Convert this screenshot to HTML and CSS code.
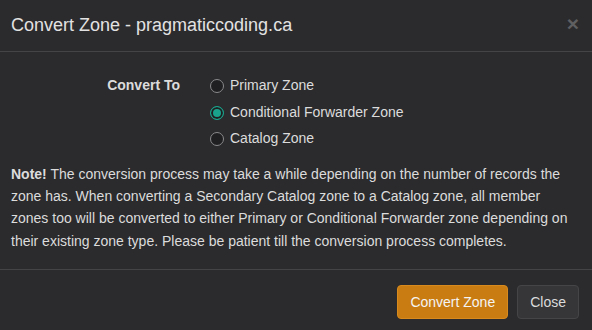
FILE: index.html
```html
<!DOCTYPE html>
<html lang="en">
<head>
    <meta charset="UTF-8">
    <meta name="viewport" content="width=device-width, initial-scale=1.0">
    <title>Convert Zone</title>
    <link rel="stylesheet" href="styles.css">
</head>
<body>
    <div class="modal">
        <div class="modal-header">
            <h4 class="modal-title">Convert Zone - pragmaticcoding.ca</h4>
            <button class="close" type="button">&times;</button>
        </div>
        <div class="modal-body">
            <div class="form-row">
                <label class="control-label">Convert To</label>
                <div class="radios">
                    <label class="radio"><input type="radio" name="zoneType" value="Primary"><span>Primary Zone</span></label>
                    <label class="radio"><input type="radio" name="zoneType" value="Forwarder" checked><span>Conditional Forwarder Zone</span></label>
                    <label class="radio"><input type="radio" name="zoneType" value="Catalog"><span>Catalog Zone</span></label>
                </div>
            </div>
            <p class="note"><b>Note!</b> The conversion process may take a while depending on the number of records the zone has. When converting a Secondary Catalog zone to a Catalog zone, all member zones too will be converted to either Primary or Conditional Forwarder zone depending on their existing zone type. Please be patient till the conversion process completes.</p>
        </div>
        <div class="modal-footer">
            <button class="btn btn-warning" type="button">Convert Zone</button>
            <button class="btn btn-default" type="button">Close</button>
        </div>
    </div>
</body>
</html>
```

FILE: styles.css
```css
body {
    margin: 0;
    padding: 0;
    background: #2b2b2d;
    font-family: 'Liberation Sans', Arial, sans-serif;
    font-size: 14px;
    color: #dcdcdc;
}
.modal {
    background: #2b2b2d;
}
.modal-header {
    display: flex;
    align-items: center;
    justify-content: space-between;
    height: 52px;
    padding: 0 11px;
    border-bottom: 1px solid #444446;
    box-sizing: border-box;
}
.modal-title {
    margin: 0;
    font-size: 18px;
    font-weight: normal;
    color: #e2e2e2;
}
.close {
    background: none;
    border: none;
    padding: 0;
    margin-right: 2px;
    margin-top: -5px;
    font-family: 'Liberation Sans', Arial, sans-serif;
    font-size: 21px;
    font-weight: bold;
    line-height: 1;
    color: #5f5f61;
    cursor: pointer;
}
.modal-body {
    padding: 20px 11px 17px;
}
.form-row {
    display: flex;
}
.control-label {
    width: 169px;
    text-align: right;
    font-weight: bold;
    line-height: 26.5px;
}
.radios {
    display: flex;
    flex-direction: column;
    margin-left: 29px;
}
.radio {
    display: flex;
    align-items: center;
    height: 26.5px;
}
.radio input {
    appearance: none;
    -webkit-appearance: none;
    width: 14px;
    height: 14px;
    margin: 2px 6px 0 1px;
    border: 1px solid #8a8a8c;
    border-radius: 50%;
    background: #1f1f21;
    box-sizing: border-box;
}
.radio input:checked {
    border-color: #1aa38c;
    background: #1aa38c;
    box-shadow: inset 0 0 0 2px #1f1f21;
}
.note {
    margin: 11px 0 0;
    line-height: 22.4px;
}
.modal-footer {
    display: flex;
    justify-content: flex-end;
    gap: 9px;
    padding: 15px 13px 11px;
    border-top: 1px solid #444446;
}
.btn {
    padding: 6px 12px;
    height: 34px;
    box-sizing: border-box;
    font-family: 'Liberation Sans', Arial, sans-serif;
    font-size: 14px;
    line-height: 20px;
    border-radius: 4px;
    cursor: pointer;
}
.btn-warning {
    background: #c97c12;
    border: 1px solid #d88a1c;
    color: #f4f4f4;
}
.btn-default {
    background: #363638;
    border: 1px solid #454547;
    color: #dcdcdc;
}
```
